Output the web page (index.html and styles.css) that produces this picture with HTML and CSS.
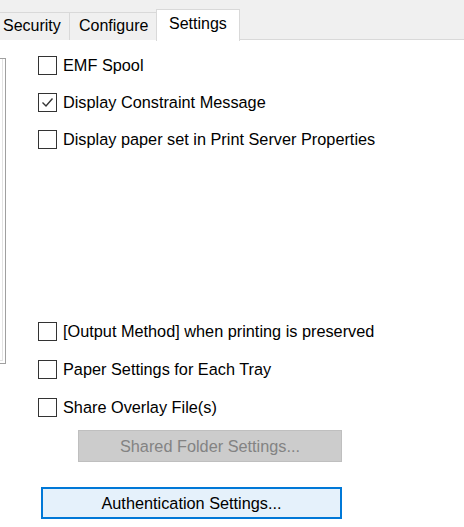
FILE: index.html
```html
<!DOCTYPE html>
<html>
<head>
<meta charset="utf-8">
<link rel="stylesheet" href="styles.css">
</head>
<body>
<div class="tabstrip">
  <div class="tab first">Security</div>
  <div class="tab">Configure</div>
  <div class="tab active">Settings</div>
  <div class="tabfill"></div>
</div>
<div class="content">
  <div class="leftbox"></div>
  <div class="main">
    <div class="group top">
      <label class="row"><span class="cb"></span>EMF Spool</label>
      <label class="row"><span class="cb checked"><svg width="13" height="11" viewBox="0 0 13 11"><path d="M1.5 5.5 L5 9 L11.5 1.5" fill="none" stroke="#333" stroke-width="1.4"/></svg></span>Display Constraint Message</label>
      <label class="row"><span class="cb"></span>Display paper set in Print Server Properties</label>
    </div>
    <div class="group bottom">
      <label class="row"><span class="cb"></span>[Output Method] when printing is preserved</label>
      <label class="row"><span class="cb"></span>Paper Settings for Each Tray</label>
      <label class="row"><span class="cb"></span>Share Overlay File(s)</label>
    </div>
    <div class="btn disabled">Shared Folder Settings...</div>
    <div class="btn focus">Authentication Settings...</div>
  </div>
</div>
</body>
</html>
```
FILE: styles.css
```css
html, body {
  margin: 0;
  padding: 0;
  background: #ffffff;
  font-family: "Liberation Sans", Arial, sans-serif;
  font-size: 16.3px;
  color: #000;
  width: 464px;
  height: 527px;
  overflow: hidden;
}
.tabstrip {
  display: flex;
  align-items: flex-end;
  height: 40px;
  background: #f0f0f0;
  box-sizing: border-box;
  font-size: 16px;
}
.tab {
  height: 28px;
  box-sizing: border-box;
  border: 1px solid #d9d9d9;
  border-bottom: none;
  border-left: none;
  padding: 0 9px;
  line-height: 26px;
  background: #f0f0f0;
  white-space: nowrap;
}
.tab.first {
  padding-left: 3px;
  width: 70px;
}
.tab:nth-child(2) {
  width: 87px;
}
.tab.active {
  height: 32px;
  width: 84px;
  background: #ffffff;
  border-left: 1px solid #d9d9d9;
  margin-left: -1px;
  padding-left: 12px;
  line-height: 27px;
  position: relative;
  top: 1px;
}
.tabfill {
  flex: 1;
  height: 1px;
  border-bottom: 1px solid #d9d9d9;
}
.content {
  display: flex;
}
.leftbox {
  width: 5px;
  height: 304px;
  margin-top: 18px;
  border: 1px solid #a0a0a0;
  border-left: none;
  box-shadow: inset -2px -2px 0 #ffffff, inset -3px -3px 0 #e3e3e3;
  flex: none;
}
.main {
  margin-left: 32px;
  display: flex;
  flex-direction: column;
}
.group {
  display: flex;
  flex-direction: column;
  gap: 19px;
}
.group.top {
  margin-top: 16px;
}
.group.bottom {
  margin-top: 174px;
  gap: 20px;
}
.row {
  display: flex;
  align-items: center;
  height: 18px;
  white-space: nowrap;
}
.cb {
  width: 19px;
  height: 19px;
  box-sizing: border-box;
  border: 1px solid #333333;
  background: #fff;
  margin-right: 6px;
  display: flex;
  align-items: center;
  justify-content: center;
  flex: none;
}
.btn {
  box-sizing: border-box;
  height: 32px;
  display: flex;
  align-items: center;
  justify-content: center;
  width: 264px;
}
.btn.disabled {
  margin-top: 14px;
  margin-left: 40px;
  background: #cccccc;
  border: 1px solid #bfbfbf;
  color: #838383;
}
.btn.focus {
  margin-top: 25px;
  margin-left: 3px;
  width: 301px;
  background: #e5f1fb;
  border: 2px solid #0078d7;
}
```
